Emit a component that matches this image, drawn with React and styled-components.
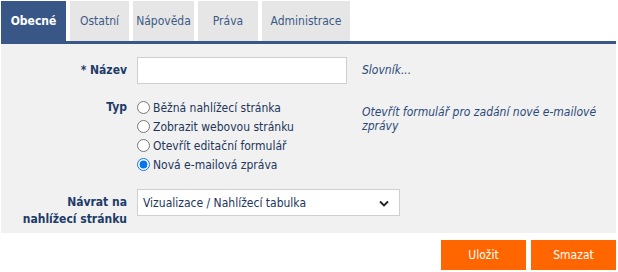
import React from 'react';
import styled, { createGlobalStyle } from 'styled-components';

const GlobalStyle = createGlobalStyle`
  html, body { margin: 0; padding: 0; background: #ffffff; }
  body { font-family: "DejaVu Sans Condensed", "DejaVu Sans", sans-serif; font-size: 12px; }
`;

const Page = styled.div`
  width: 618px;
  height: 272px;
  padding: 1px 2px 0 1px;
  box-sizing: border-box;
`;

const TabBar = styled.div`
  display: flex;
  gap: 4px;
  height: 40px;
  border-bottom: 3px solid #395786;
`;

const Tab = styled.div`
  display: flex;
  align-items: center;
  justify-content: center;
  width: ${p => p.w}px;
  background: ${p => (p.active ? '#395786' : '#e6e6e6')};
  color: ${p => (p.active ? '#ffffff' : '#3d5a86')};
  font-weight: ${p => (p.active ? 'bold' : 'normal')};
  font-size: 12px;
`;

const Panel = styled.div`
  background: #f1f1f1;
  padding: 13px 0 5px;
  display: grid;
  grid-template-columns: 126px 210px 1fr;
  column-gap: 10px;
  align-items: start;
`;

const Label = styled.div`
  text-align: right;
  font-weight: bold;
  color: #1d3b68;
  font-size: 12px;
  line-height: 17px;
  padding-top: ${p => p.pt || 0}px;
`;

const Input = styled.input`
  width: 210px;
  height: 27px;
  box-sizing: border-box;
  border: 1px solid #cfcfcf;
  background: #ffffff;
  margin: 0;
  display: block;
`;

const Hint = styled.div`
  font-style: italic;
  color: #2c4a78;
  font-size: 12px;
  line-height: 14px;
  padding-top: ${p => p.pt || 0}px;
  padding-left: 5px;
  max-width: 240px;
`;

const Spacer = styled.div`
  grid-column: 1 / -1;
  height: ${p => p.h}px;
`;

const Radios = styled.div`
  display: flex;
  flex-direction: column;
`;

const RadioRow = styled.label`
  display: flex;
  align-items: center;
  height: 19px;
  color: #22365a;
  font-size: 12px;
  gap: 2px;
  white-space: nowrap;

  input {
    margin: 0 1px 0 0;
    width: 13px;
    height: 13px;
    accent-color: #0a74e8;
  }
`;

const SelectBox = styled.div`
  grid-column: 2 / span 2;
  position: relative;
  width: 263px;
  height: 27px;
  box-sizing: border-box;
  border: 1px solid #cfcfcf;
  background: #ffffff;
  display: flex;
  align-items: center;
  padding-left: 5px;
  color: #22365a;
  font-size: 12px;

  svg {
    position: absolute;
    right: 10px;
    top: 10px;
  }
`;

const Actions = styled.div`
  display: flex;
  justify-content: flex-end;
  gap: 5px;
  padding-top: 7px;
`;

const Button = styled.button`
  width: 85px;
  height: 30px;
  border: none;
  background: #ff6600;
  color: #ffffff;
  font-family: inherit;
  font-size: 12px;
  padding: 0;
`;

const types = [
  'Běžná nahlížecí stránka',
  'Zobrazit webovou stránku',
  'Otevřít editační formulář',
  'Nová e-mailová zpráva',
];

export default function App() {
  return (
    <Page>
      <GlobalStyle />
      <TabBar>
        <Tab active w={65}>Obecné</Tab>
        <Tab w={59}>Ostatní</Tab>
        <Tab w={61}>Nápověda</Tab>
        <Tab w={60}>Práva</Tab>
        <Tab w={88}>Administrace</Tab>
      </TabBar>
      <Panel>
        <Label pt={5}>* Název</Label>
        <div><Input type="text" /></div>
        <Hint pt={6}>Slovník...</Hint>
        <Spacer h={14} />
        <Label pt={1}>Typ</Label>
        <Radios>
          {types.map((t, i) => (
            <RadioRow key={t}>
              <input type="radio" name="typ" defaultChecked={i === 3} />
              {t}
            </RadioRow>
          ))}
        </Radios>
        <Hint pt={7}>Otevřít formulář pro zadání nové e-mailové zprávy</Hint>
        <Spacer h={15} />
        <Label pt={5}>Návrat na<br />nahlížecí stránku</Label>
        <SelectBox>
          Vizualizace / Nahlížecí tabulka
          <svg width="10" height="7" viewBox="0 0 10 7">
            <path d="M1 1.5 L5 5.5 L9 1.5" fill="none" stroke="#222" strokeWidth="1.8" />
          </svg>
        </SelectBox>
      </Panel>
      <Actions>
        <Button>Uložit</Button>
        <Button>Smazat</Button>
      </Actions>
    </Page>
  );
}
